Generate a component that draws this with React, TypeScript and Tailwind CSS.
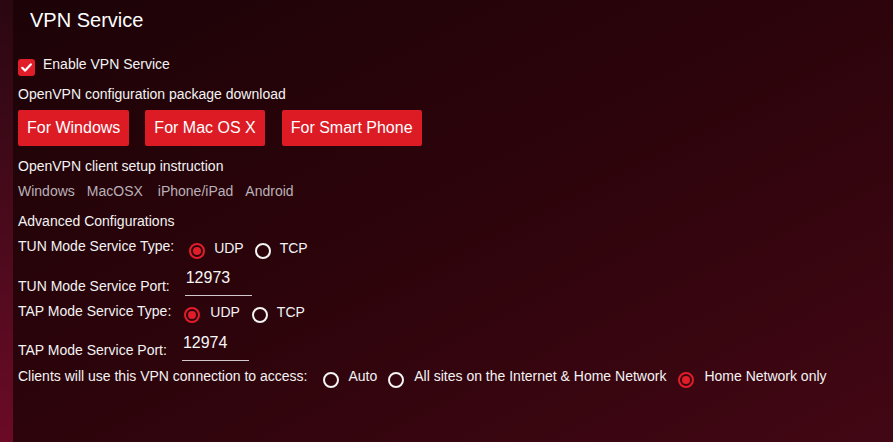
import React from "react";

function Radio({ checked, className = "" }: { checked?: boolean; className?: string }) {
  return (
    <span
      className={
        "flex h-[16px] w-[16px] shrink-0 items-center justify-center rounded-full border-2 " +
        (checked ? "border-[#e11d2a] " : "border-[#f4f4f4] ") +
        className
      }
    >
      {checked && <span className="h-[8px] w-[8px] rounded-full bg-[#e11d2a]" />}
    </span>
  );
}

function PortInput({ value }: { value: string }) {
  return (
    <input
      readOnly
      value={value}
      className="h-[28px] w-[67px] border-0 border-b border-[#cfc8cc] bg-transparent pl-[1px] pb-[7px] pt-0 text-[16px] leading-[20px] text-[#f6f6f6] outline-none"
      style={{ fontFamily: "'Liberation Sans', Arial, sans-serif" }}
    />
  );
}

export default function App() {
  return (
    <div
      className="flex h-[442px] w-[893px] overflow-hidden text-[14px] leading-[16px] text-[#f3f3f3]"
      style={{ fontFamily: "'Liberation Sans', Arial, sans-serif" }}
    >
      <div className="w-[13px] shrink-0 bg-linear-to-b from-[#2a0711] to-[#6b0a27]" />
      <div className="relative flex-1 bg-linear-to-br from-[#1c0307] via-[#2d040b] to-[#420714]">
        <div className="flex flex-col pl-[5px]">
          {/* Title */}
          <div className="h-[56px] pt-[8px] pl-[12px] text-[20px] leading-[24px] text-white">VPN Service</div>

          {/* Enable */}
          <div className="flex h-[30px] items-start">
            <span className="mt-[3px] flex h-[17px] w-[17px] items-center justify-center rounded-[3px] bg-[#e11d2a]">
              <svg width="13" height="13" viewBox="0 0 13 13">
                <polyline points="2.2,6.8 5.2,9.6 10.8,3.4" fill="none" stroke="white" strokeWidth="2.2" strokeLinecap="round" strokeLinejoin="round" />
              </svg>
            </span>
            <span className="ml-[8px]">Enable VPN Service</span>
          </div>

          {/* download label */}
          <div className="h-[24px]">OpenVPN configuration package download</div>

          {/* buttons */}
          <div className="flex h-[36px] items-stretch text-[16px]">
            <button className="flex items-center rounded-[2px] bg-[#dc1b25] px-[9px] text-white">For Windows</button>
            <button className="ml-[16px] flex items-center rounded-[2px] bg-[#dc1b25] px-[9px] text-white">For Mac OS X</button>
            <button className="ml-[17px] flex items-center rounded-[2px] bg-[#dc1b25] px-[9px] text-white">For Smart Phone</button>
          </div>

          <div className="mt-[12px] h-[16px]">OpenVPN client setup instruction</div>

          <div className="mt-[9px] flex h-[16px] text-[#bab1b8]">
            <span>Windows</span>
            <span className="ml-[12px]">MacOSX</span>
            <span className="ml-[15px]">iPhone/iPad</span>
            <span className="ml-[12px]">Android</span>
          </div>

          <div className="mt-[14px] h-[16px]">Advanced Configurations</div>

          {/* TUN type */}
          <div className="mt-[9px] flex h-[30px] items-start">
            <span>TUN Mode Service Type:</span>
            <Radio checked className="ml-[15px] mt-[5px]" />
            <span className="ml-[9px] mt-[2px]">UDP</span>
            <Radio className="ml-[11px] mt-[5px]" />
            <span className="ml-[9px] mt-[2px]">TCP</span>
          </div>

          {/* TUN port */}
          <div className="flex h-[28px] items-start">
            <span className="mt-[10px]">TUN Mode Service Port:</span>
            <span className="ml-[15px]">
              <PortInput value="12973" />
            </span>
          </div>

          {/* TAP type */}
          <div className="mt-[7px] flex h-[30px] items-start">
            <span>TAP Mode Service Type:</span>
            <Radio checked className="ml-[13px] mt-[4px]" />
            <span className="ml-[10px] mt-[1px]">UDP</span>
            <Radio className="ml-[12px] mt-[4px]" />
            <span className="ml-[9px] mt-[1px]">TCP</span>
          </div>

          {/* TAP port */}
          <div className="flex h-[27px] items-start">
            <span className="mt-[9px]">TAP Mode Service Port:</span>
            <span className="ml-[15px]">
              <PortInput value="12974" />
            </span>
          </div>

          {/* Clients */}
          <div className="mt-[8px] flex h-[20px] items-start">
            <span>Clients will use this VPN connection to access:</span>
            <Radio className="ml-[16px] mt-[4px]" />
            <span className="ml-[9px]">Auto</span>
            <Radio className="ml-[11px] mt-[4px]" />
            <span className="ml-[10px]">All sites on the Internet &amp; Home Network</span>
            <Radio checked className="ml-[12px] mt-[4px]" />
            <span className="ml-[10px]">Home Network only</span>
          </div>
        </div>
      </div>
    </div>
  );
}
